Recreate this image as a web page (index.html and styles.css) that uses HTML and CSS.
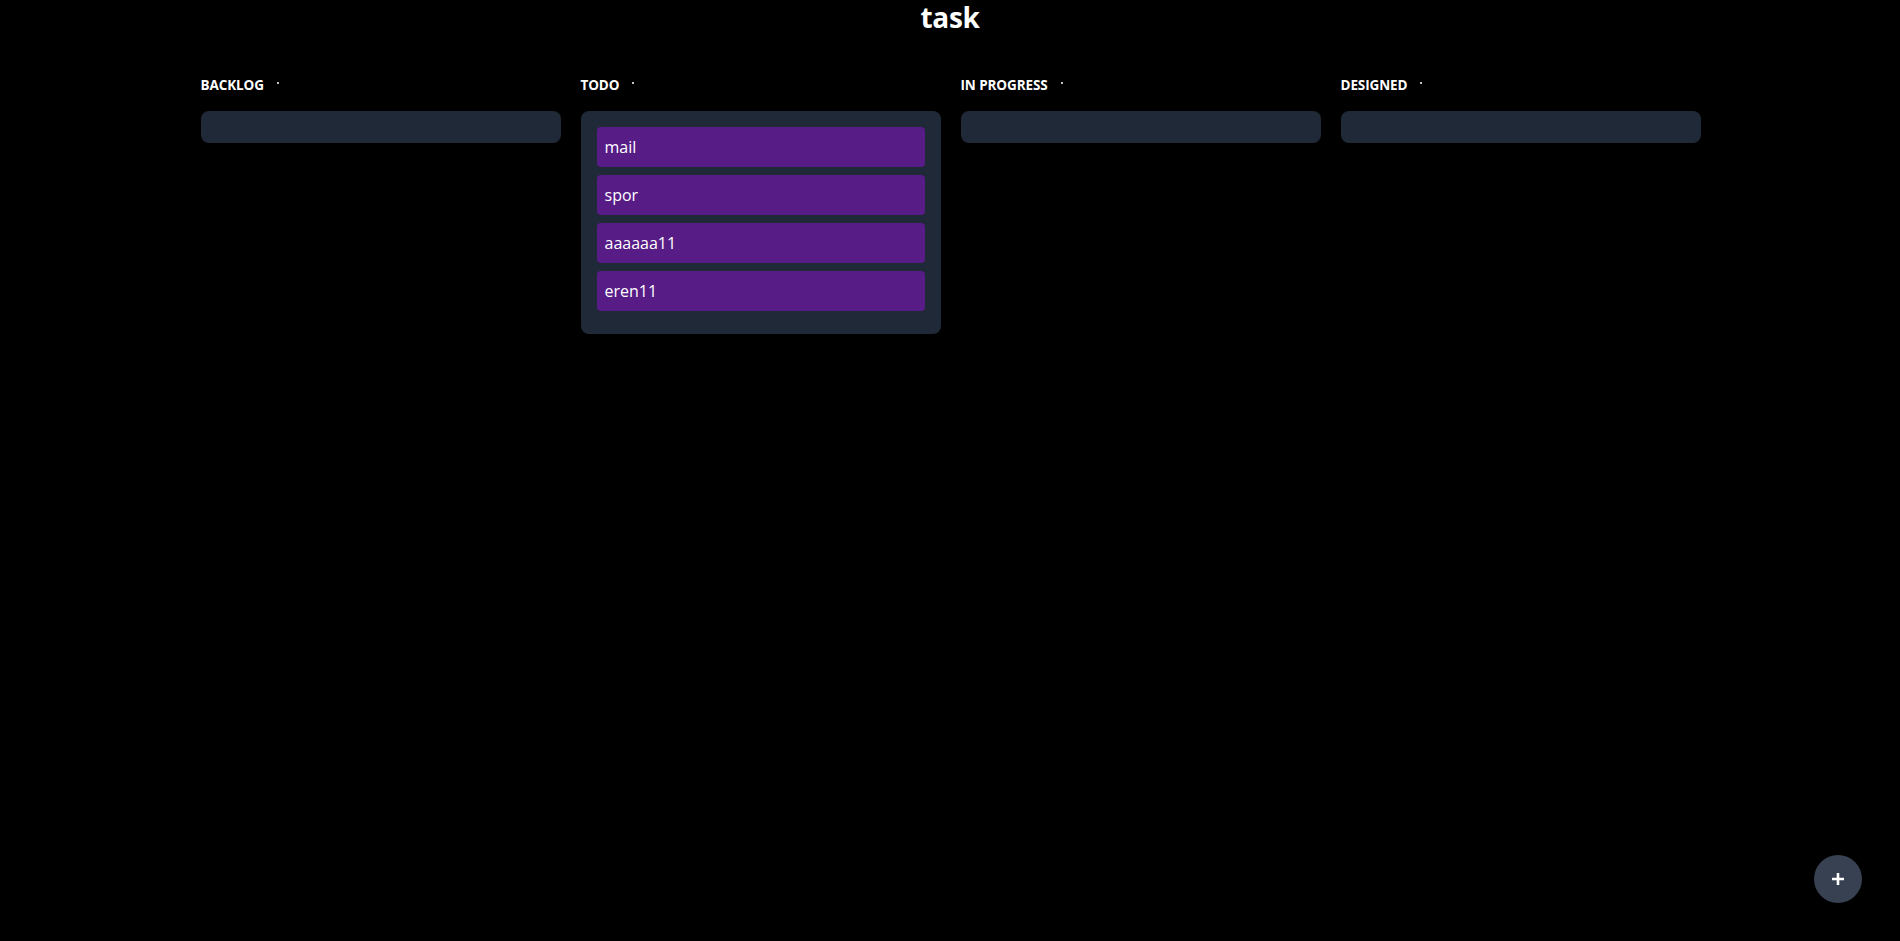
FILE: index.html
```html
<!DOCTYPE html>
<html>
<head>
<meta charset="utf-8">
<link rel="stylesheet" href="styles.css">
<title>task</title>
</head>
<body>
<h1 class="title">task</h1>
<main class="board">
  <section class="column">
    <div class="column-head"><span class="column-name">BACKLOG</span><span class="dot"></span></div>
    <div class="column-body"></div>
  </section>
  <section class="column">
    <div class="column-head"><span class="column-name">TODO</span><span class="dot"></span></div>
    <div class="column-body">
      <div class="card">mail</div>
      <div class="card">spor</div>
      <div class="card">aaaaaa11</div>
      <div class="card">eren11</div>
    </div>
  </section>
  <section class="column">
    <div class="column-head"><span class="column-name">IN PROGRESS</span><span class="dot"></span></div>
    <div class="column-body"></div>
  </section>
  <section class="column">
    <div class="column-head"><span class="column-name">DESIGNED</span><span class="dot"></span></div>
    <div class="column-body"></div>
  </section>
</main>
<button class="fab" aria-label="add">
  <svg width="16" height="16" viewBox="0 0 16 16"><path d="M8 2v12M2 8h12" stroke="#fff" stroke-width="2.6" stroke-linecap="butt"/></svg>
</button>
</body>
</html>
```

FILE: styles.css
```css
html, body {
  margin: 0;
  padding: 0;
  background: #000;
  color: #fff;
  font-family: "Open Sans", "Noto Sans", "Liberation Sans", sans-serif;
  height: 100%;
}

.title {
  margin: 0;
  padding-top: 0;
  text-align: center;
  font-size: 28px;
  font-weight: 700;
  line-height: 34px;
  letter-spacing: -0.3px;
}

.board {
  width: 1500px;
  margin: 0 auto;
  padding-top: 41px;
  padding-left: 1px;
  display: grid;
  grid-template-columns: repeat(4, 360px);
  column-gap: 20px;
  align-items: start;
}

.column-head {
  display: flex;
  align-items: center;
  height: 20px;
  font-size: 13.5px;
  font-weight: 700;
  letter-spacing: -0.1px;
  margin-bottom: 16px;
}

.dot {
  width: 2px;
  height: 2px;
  background: #fff;
  border-radius: 1px;
  margin-left: 13px;
  margin-top: -4px;
}

.column-body {
  background: #1f2937;
  border-radius: 8px;
  padding: 16px 16px 16px;
}

.card {
  background: #581c87;
  border-radius: 4px;
  height: 40px;
  box-sizing: border-box;
  padding: 8px 8px;
  font-size: 16px;
  line-height: 24px;
  margin-bottom: 8px;
}

.card:last-child {
  margin-bottom: 7px;
}

.fab {
  position: fixed;
  right: 38px;
  bottom: 38px;
  width: 48px;
  height: 48px;
  border-radius: 50%;
  border: none;
  background: #374151;
  display: flex;
  align-items: center;
  justify-content: center;
  padding: 0;
}
```
